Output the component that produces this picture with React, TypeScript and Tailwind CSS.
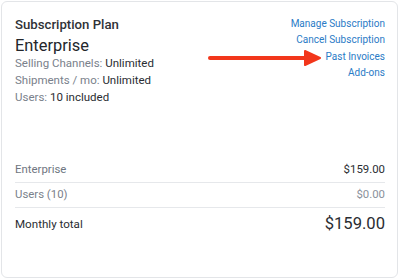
export default function App() {
    return (
        <main className="w-[400px] h-[280px] bg-white p-px" style={{ fontFamily: "Roboto, 'Liberation Sans', sans-serif" }}>
            <section className="relative w-[397px] h-[277px] rounded-md border border-[#e3e5e8] pl-[13px] pr-[12px] pt-[13px] flex flex-col">
                <div className="flex justify-between">
                    <div>
                        <h2 className="text-[13.2px] leading-[20px] font-medium text-[#2f3237]">Subscription Plan</h2>
                        <div className="text-[16.4px] leading-[22px] text-[#23262b]">Enterprise</div>
                        <div className="-mt-[2px] text-[11.5px] leading-[17px] text-[#7a818b]">
                            <div>Selling Channels: <span className="text-[#2a2d32]">Unlimited</span></div>
                            <div>Shipments / mo: <span className="text-[#2a2d32]">Unlimited</span></div>
                            <div>Users: <span className="text-[#2a2d32]">10 included</span></div>
                        </div>
                    </div>
                    <div className="flex flex-col items-end text-[10px] leading-[16.4px] text-[#2a7bc6] pt-[1px]">
                        <a>Manage Subscription</a>
                        <a>Cancel Subscription</a>
                        <a>Past Invoices</a>
                        <a>Add-ons</a>
                    </div>
                </div>

                {/* arrow pointing at Past Invoices */}
                <svg className="absolute left-[205px] top-[46px]" width="116" height="20" viewBox="0 0 116 20">
                    <line x1="3" y1="10" x2="100" y2="10" stroke="#f2361b" strokeWidth="4" strokeLinecap="round" />
                    <polygon points="98,3 113,10 98,17" fill="#f2361b" stroke="#f2361b" strokeWidth="2" strokeLinejoin="round" />
                </svg>

                <div className="mt-[52px] text-[11.4px]">
                    <div className="flex justify-between items-center h-[25px] border-b border-[#e6e8eb]">
                        <span className="text-[#6f7681]">Enterprise</span>
                        <span className="text-[#2a2d32]">$159.00</span>
                    </div>
                    <div className="flex justify-between items-center h-[25px] border-b border-[#e6e8eb]">
                        <span className="text-[#7a818b]">Users (10)</span>
                        <span className="text-[#8a919b]">$0.00</span>
                    </div>
                    <div className="flex justify-between items-center h-[33px]">
                        <span className="text-[11.6px] text-[#2a2d32]">Monthly total</span>
                        <span className="text-[16.6px] text-[#2a2d32]">$159.00</span>
                    </div>
                </div>
            </section>
        </main>
    )
}
